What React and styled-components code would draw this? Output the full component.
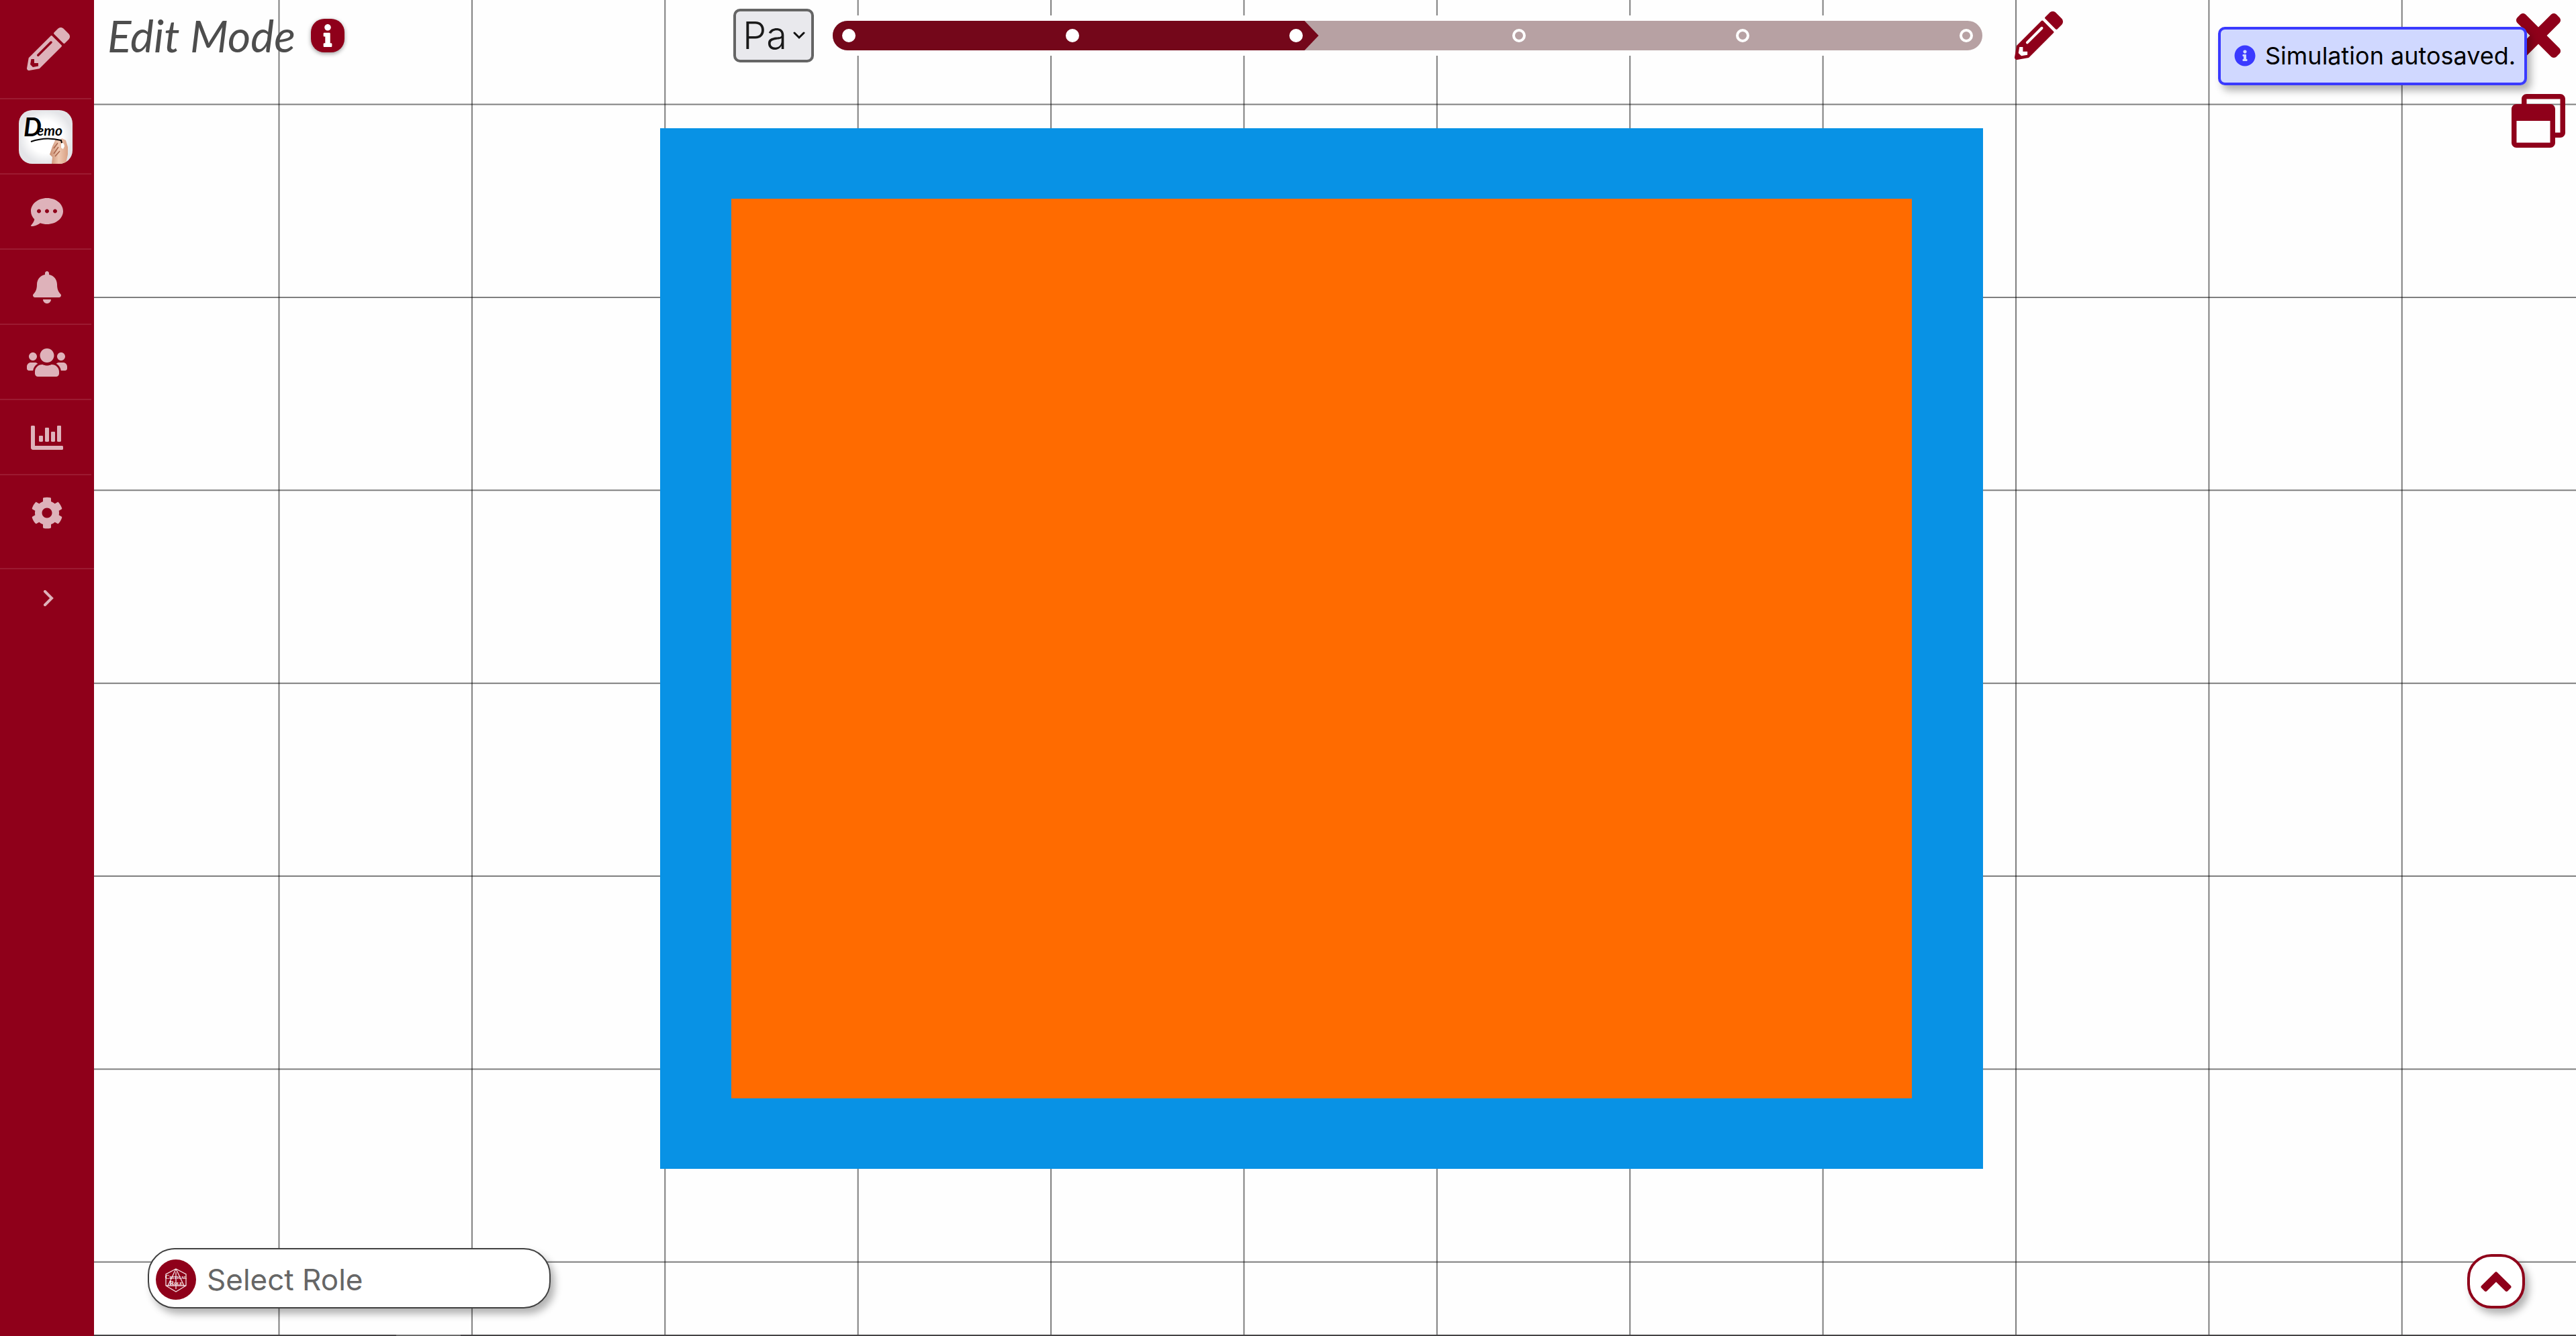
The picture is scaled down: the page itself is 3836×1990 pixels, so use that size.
import React from 'react';
import styled, { createGlobalStyle } from 'styled-components';
import {
  FaPencilAlt, FaCommentDots, FaBell, FaUsers, FaChartBar, FaCog,
  FaInfo, FaInfoCircle, FaTimes, FaRegWindowRestore,
} from 'react-icons/fa';

const crimson = '#8f001a';
const sans = 'Inter, "Open Sans", sans-serif';

const GlobalStyle = createGlobalStyle`
  *, *::before, *::after { box-sizing: border-box; }
  html, body, #root { height: 100%; margin: 0; }
  body { background: #fefefe; font-family: ${sans}; overflow: hidden; }
  button, input, select { font: inherit; margin: 0; }
  button { padding: 0; border: 0; background: none; cursor: pointer; }
  svg { display: block; flex: none; }
`;

const Shell = styled.div`
  display: flex;
  min-height: 100vh;
  position: relative;
  isolation: isolate;
`;

const Grid = styled.svg`
  position: absolute;
  inset: 0;
  width: 100%;
  height: 100%;
  z-index: -1;
`;

const Sidebar = styled.nav`
  flex: none;
  width: 140px;
  background: ${crimson};
`;

const NavItem = styled.button`
  display: flex;
  align-items: center;
  justify-content: center;
  width: ${(p) => (p.$wide ? 140 : 136)}px;
  height: ${(p) => p.$height || 112}px;
  padding: ${(p) => p.$pad || '2px 0 0 4px'};
  border-bottom: ${(p) => (p.$last ? 0 : 2)}px solid #9c1a31;
  color: #deb2ba;
  font-size: ${(p) => p.$size || 48}px;
`;

const Main = styled.main`
  flex: 1;
  display: flex;
  flex-direction: column;
  min-width: 0;
`;

const TopBar = styled.header`
  display: grid;
  grid-template-columns: 932px 1fr 756px;
  align-items: start;
  padding: 5px 8px 0 20px;
  height: 191px;
`;

const TitleGroup = styled.div`
  display: flex;
  align-items: center;
  gap: 16px;
  height: 96px;
`;

const Title = styled.h1`
  margin: 0;
  width: 287px;
  color: #4d4d4d;
  font: italic 400 66px/80px Lato, sans-serif;
  white-space: nowrap;
`;

const InfoButton = styled.button`
  display: grid;
  place-items: center;
  width: 50px;
  height: 50px;
  border-radius: 20px;
  background: ${crimson};
  color: #fff;
  font-size: 34px;
  box-shadow: 0 2px 6px rgba(0, 0, 0, 0.4);
`;

const Timeline = styled.div`
  display: flex;
  align-items: center;
  height: 96px;
`;

const SelectWrap = styled.label`
  display: grid;
  align-items: center;
  flex: none;
  margin-right: 20px;
  > * { grid-area: 1 / 1; }
  > svg { justify-self: end; margin-right: 13px; pointer-events: none; }
`;

const PageSelect = styled.select`
  appearance: none;
  width: 120px;
  height: 80px;
  padding: 0 0 0 10px;
  border: 4px solid #656565;
  border-radius: 10px;
  background: #e9e9ed;
  color: #1a1a1a;
  font-size: 56px;
  font-weight: 300;
`;

const Track = styled.div`
  flex: 1;
  display: grid;
  align-items: center;
  height: 60px;
  border: 8px solid #fefefe;
  border-radius: 30px;
  background: #b7a1a3;
  > * { grid-area: 1 / 1; }
`;

const Progress = styled.div`
  width: ${(p) => `calc((100% - 48px) * ${p.$ratio} + 58px)`};
  height: 44px;
  border-radius: 22px 0 0 22px;
  background: #74071a;
  clip-path: polygon(0 0, calc(100% - 21px) 0, 100% 50%, calc(100% - 21px) 100%, 0 100%);
`;

const Stops = styled.div`
  display: flex;
  justify-content: space-between;
  padding: 0 14px;
  z-index: 1;
`;

const Stop = styled.button`
  width: 20px;
  height: 20px;
  border: 4px solid #fff;
  border-radius: 50%;
  background: ${(p) => (p.$done ? '#fff' : 'transparent')};
`;

const EditButton = styled.button`
  margin-left: 40px;
  color: ${crimson};
  font-size: 72px;
`;

const Actions = styled.div`
  display: flex;
  flex-direction: column;
  align-items: center;
  justify-self: end;
  gap: 39px;
`;

const ActionButton = styled.button`
  color: ${crimson};
  font-size: ${(p) => p.$size}px;
`;

const Toast = styled.output`
  position: absolute;
  top: 40px;
  right: 73px;
  display: flex;
  align-items: center;
  gap: 14px;
  width: 460px;
  height: 87px;
  padding: 0 20px 2px;
  border: 4px solid #3a3aff;
  border-radius: 10px;
  background: #d0d8ff;
  color: #000;
  font-size: 36px;
  white-space: nowrap;
  box-shadow: 6px 8px 12px rgba(0, 0, 0, 0.3);
  > svg { color: #3a3aff; font-size: 32px; }
`;

const Stage = styled.section`
  align-self: center;
  width: 53.3%;
  aspect-ratio: 197 / 155;
  margin-right: 40px;
  border: solid #0892e5;
  border-width: 105px 106px;
  background: #ff6b00;
`;

const BottomBar = styled.footer`
  flex: 1;
  display: flex;
  align-items: flex-end;
  justify-content: space-between;
  padding: 0 76px 41px 80px;
`;

const RoleField = styled.label`
  display: flex;
  align-items: center;
  gap: 16px;
  width: 600px;
  height: 90px;
  padding: 4px 24px 0 10px;
  border: 2px solid #404040;
  border-radius: 40px;
  background: #fff;
  box-shadow: 6px 8px 12px rgba(0, 0, 0, 0.3);
`;

const RoleInput = styled.input`
  flex: 1;
  min-width: 0;
  padding: 0;
  border: 0;
  outline: 0;
  background: none;
  font-size: 44px;
  &::placeholder { color: #666; opacity: 1; }
`;

const UpButton = styled.button`
  display: grid;
  place-items: center;
  width: 86px;
  height: 81px;
  border: 4px solid ${crimson};
  border-radius: 36px;
  background: #fff;
  color: ${crimson};
  box-shadow: 6px 8px 12px rgba(0, 0, 0, 0.3);
`;

const BaseLine = styled.div`
  position: absolute;
  left: 140px;
  right: 0;
  bottom: 0;
  height: 2px;
  background: linear-gradient(90deg, #454345 450px, #6b6b6b 450px 546px, #454345 546px);
`;

function GridLines() {
  const columns = Array.from({ length: 12 }, (_, i) => `${10.831 + i * 7.492}%`);
  const rows = Array.from({ length: 7 }, (_, i) => `${7.814 + i * 14.442}%`);
  return (
    <Grid stroke="#000" strokeOpacity="0.5" strokeWidth="2" aria-hidden="true">
      {columns.map((x) => <line key={x} x1={x} x2={x} y1="0" y2="100%" />)}
      {rows.map((y) => <line key={y} x1="0" x2="100%" y1={y} y2={y} />)}
    </Grid>
  );
}

function DemoLogo() {
  return (
    <svg width="80" height="80" viewBox="0 0 80 80">
      <defs>
        <radialGradient id="paper"><stop offset=".6" stopColor="#fff" /><stop offset="1" stopColor="#e4e5e8" /></radialGradient>
        <linearGradient id="skin" x2="1"><stop stopColor="#c98d70" /><stop offset=".5" stopColor="#efc9b2" /><stop offset="1" stopColor="#d9a184" /></linearGradient>
        <clipPath id="tile"><rect width="80" height="80" rx="20" /></clipPath>
      </defs>
      <g clipPath="url(#tile)">
        <rect width="80" height="80" fill="url(#paper)" />
        <path d="M49 80 50 70 46 66 50 54 55 43 61 45 64 42 70 45 73 55 73 66 70 80Z" fill="url(#skin)" />
        <path d="M52 57 58 49M52 65 59 55M54 69 61 61" stroke="#a8644b" strokeWidth="1.5" fill="none" />
        <path d="M63 50q4-3 5 4l-2 4-3-2Z" fill="#fff" />
        <path d="M18 47Q40 39 63 45l1 4" fill="none" stroke="#000" strokeWidth="2" />
        <g fontFamily="Lato, sans-serif" fontStyle="italic" fontWeight="700">
          <text x="7" y="39" fontSize="38">D</text>
          <text x="27" y="38" fontSize="21">emo</text>
        </g>
      </g>
    </svg>
  );
}

function RoleLogo() {
  return (
    <svg width="60" height="60" viewBox="0 0 60 60">
      <circle cx="30" cy="30" r="30" fill={crimson} />
      <path
        d="M30 14 45 22V39L30 48 15 39V22ZM30 14 18 39M30 14 42 39M15 39H45M30 19V44"
        fill="none" stroke="#f3dfe3" strokeWidth="1.3"
      />
      <g fill="#fff" fontFamily="Liberation Serif, serif" fontWeight="700" textAnchor="middle">
        <text x="30" y="29" fontSize="6"><tspan fontSize="9">C</tspan>RITICAL</text>
        <text x="30" y="38" fontSize="6"><tspan fontSize="9">R</tspan>OLE</text>
      </g>
    </svg>
  );
}

export default function App() {
  return (
    <>
      <GlobalStyle />
      <Shell>
        <GridLines />
        <Sidebar>
          <NavItem $height={148} $size={64} $pad="0 0 0 8px" aria-label="Edit"><FaPencilAlt /></NavItem>
          <NavItem $pad="2px 0 0" aria-label="Demo"><DemoLogo /></NavItem>
          <NavItem aria-label="Messages"><FaCommentDots /></NavItem>
          <NavItem aria-label="Notifications"><FaBell /></NavItem>
          <NavItem $size={60} aria-label="Users"><FaUsers /></NavItem>
          <NavItem aria-label="Statistics"><FaChartBar /></NavItem>
          <NavItem $wide $height={140} $pad="0 0 26px" aria-label="Settings"><FaCog /></NavItem>
          <NavItem $wide $last $height={86} $pad="0 0 0 4px" aria-label="Expand">
            <svg width="16" height="24" viewBox="0 0 16 24" fill="none" stroke="currentColor" strokeWidth="4" strokeLinecap="round">
              <path d="M3 2 13 12 3 22" />
            </svg>
          </NavItem>
        </Sidebar>
        <Main>
          <TopBar>
            <TitleGroup>
              <Title>Edit Mode</Title>
              <InfoButton aria-label="Information"><FaInfo /></InfoButton>
            </TitleGroup>
            <Timeline>
              <SelectWrap>
                <PageSelect aria-label="Page" defaultValue="Pa"><option>Pa</option></PageSelect>
                <svg width="18" height="12" viewBox="0 0 18 12" fill="none" stroke="#111" strokeWidth="3" strokeLinecap="round">
                  <path d="M2 2 9 9 16 2" />
                </svg>
              </SelectWrap>
              <Track>
                <Progress $ratio={0.4} />
                <Stops>
                  {[0, 1, 2, 3, 4, 5].map((n) => <Stop key={n} $done={n < 3} aria-label={`Step ${n + 1}`} />)}
                </Stops>
              </Track>
              <EditButton aria-label="Edit page"><FaPencilAlt /></EditButton>
            </Timeline>
            <Actions>
              <ActionButton $size={96} aria-label="Close"><FaTimes /></ActionButton>
              <ActionButton $size={80} aria-label="Windows"><FaRegWindowRestore /></ActionButton>
            </Actions>
          </TopBar>
          <Stage aria-label="Stage" />
          <BottomBar>
            <RoleField>
              <RoleLogo />
              <RoleInput placeholder="Select Role" aria-label="Select Role" />
            </RoleField>
            <UpButton aria-label="Open panel">
              <svg width="46" height="30" viewBox="0 0 46 30" fill="currentColor" stroke="currentColor" strokeWidth="5" strokeLinejoin="round">
                <path d="M23 3 43 22.7 38.5 27.2 23 12 7.5 27.2 3 22.7Z" />
              </svg>
            </UpButton>
          </BottomBar>
        </Main>
        <Toast><FaInfoCircle /><span>Simulation autosaved.</span></Toast>
        <BaseLine />
      </Shell>
    </>
  );
}
